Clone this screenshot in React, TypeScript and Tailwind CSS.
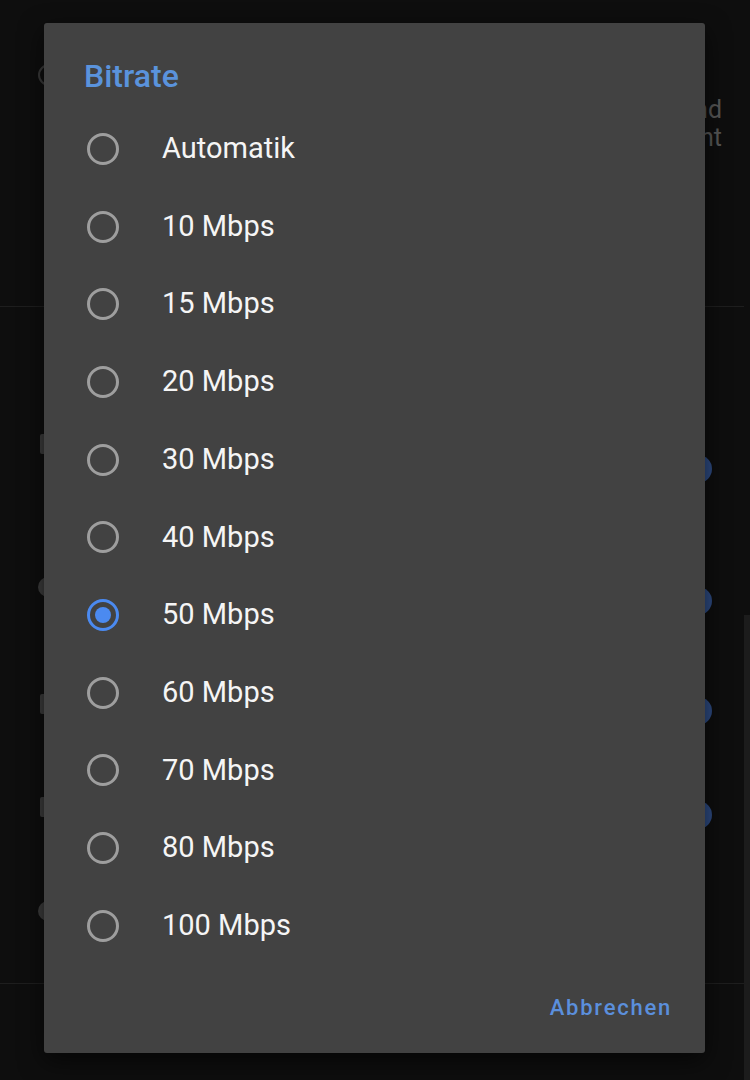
import { useState } from "react";

const options = [
    "Automatik",
    "10 Mbps",
    "15 Mbps",
    "20 Mbps",
    "30 Mbps",
    "40 Mbps",
    "50 Mbps",
    "60 Mbps",
    "70 Mbps",
    "80 Mbps",
    "100 Mbps",
];

function Radio({ checked }: { checked: boolean }) {
    if (checked) {
        return (
            <span className="w-[32px] h-[32px] rounded-full border-[3px] border-[#4b8af0] flex items-center justify-center shrink-0">
                <span className="w-[16px] h-[16px] rounded-full bg-[#4b8af0]" />
            </span>
        );
    }
    return (
        <span className="w-[32px] h-[32px] rounded-full border-[3px] border-[#9e9e9e] shrink-0" />
    );
}

function Thumb({ top }: { top: string }) {
    return (
        <span
            className={`w-[28px] h-[28px] rounded-full bg-[#2d4a80] mr-[32px] self-start ${top}`}
        />
    );
}

export default function App() {
    const [selected, setSelected] = useState("50 Mbps");
    return (
        <div
            className="relative w-[750px] h-[1080px] overflow-hidden bg-[#0e0e0e]"
            style={{ fontFamily: "Roboto, 'Noto Sans', sans-serif" }}
        >
            {/* settings screen behind the dialog */}
            <div className="flex h-full">
                <div className="flex-1 flex flex-col">
                    <div className="h-[307px] flex justify-between border-b border-[#1e1e1e]">
                        <span className="ml-[38px] mt-[64px] w-[22px] h-[22px] rounded-full border-2 border-[#3a3a3a]" />
                        <div className="mt-[96px] mr-[22px] text-[25px] leading-[28px] text-[#555] text-right">
                            <div>Hintergrund</div>
                            <div>Sicht</div>
                        </div>
                    </div>
                    <div className="pt-[92px] flex flex-col">
                        <div className="h-[140px] flex justify-between">
                            <span className="ml-[40px] mt-[35px] w-[16px] h-[20px] rounded-[2px] bg-[#3c3c3c]" />
                            <Thumb top="mt-[56px]" />
                        </div>
                        <div className="h-[110px] flex justify-between">
                            <span className="ml-[38px] mt-[38px] w-[20px] h-[20px] rounded-full bg-[#3c3c3c]" />
                            <Thumb top="mt-[48px]" />
                        </div>
                        <div className="h-[110px] flex justify-between">
                            <span className="ml-[40px] mt-[45px] w-[16px] h-[20px] rounded-[2px] bg-[#3c3c3c]" />
                            <Thumb top="mt-[48px]" />
                        </div>
                        <div className="h-[110px] flex justify-between">
                            <span className="ml-[40px] mt-[38px] w-[16px] h-[20px] rounded-[2px] bg-[#3c3c3c]" />
                            <Thumb top="mt-[42px]" />
                        </div>
                        <div className="h-[115px] flex border-b border-[#1e1e1e]">
                            <span className="ml-[38px] mt-[32px] w-[20px] h-[20px] rounded-full bg-[#3c3c3c]" />
                        </div>
                    </div>
                </div>
                <div className="w-[6px] pt-[615px]">
                    <div className="h-full bg-[#1c1c1c]" />
                </div>
            </div>

            {/* dialog */}
            <div className="absolute left-[44px] top-[23px] w-[661px] h-[1030px] bg-[#424242] rounded-[3px] shadow-[0_8px_24px_rgba(0,0,0,0.6)] flex flex-col">
                <h2 className="pt-[33px] pl-[40px] h-[86px] text-[32px] leading-[40px] font-medium text-[#5a93dc]">
                    Bitrate
                </h2>
                <div className="flex flex-col pt-[1px]">
                    {options.map((o) => (
                        <div
                            key={o}
                            onClick={() => setSelected(o)}
                            className="h-[77.7px] flex items-center pl-[43px] gap-[43px] cursor-pointer"
                        >
                            <Radio checked={selected === o} />
                            <span className="text-[29px] text-[#f5f5f5]">{o}</span>
                        </div>
                    ))}
                </div>
                <div className="mt-auto flex justify-end pr-[33px] pb-[30px]">
                    <button className="text-[22px] leading-[30px] font-medium tracking-[0.08em] text-[#5b8fdc]">
                        Abbrechen
                    </button>
                </div>
            </div>
        </div>
    );
}
